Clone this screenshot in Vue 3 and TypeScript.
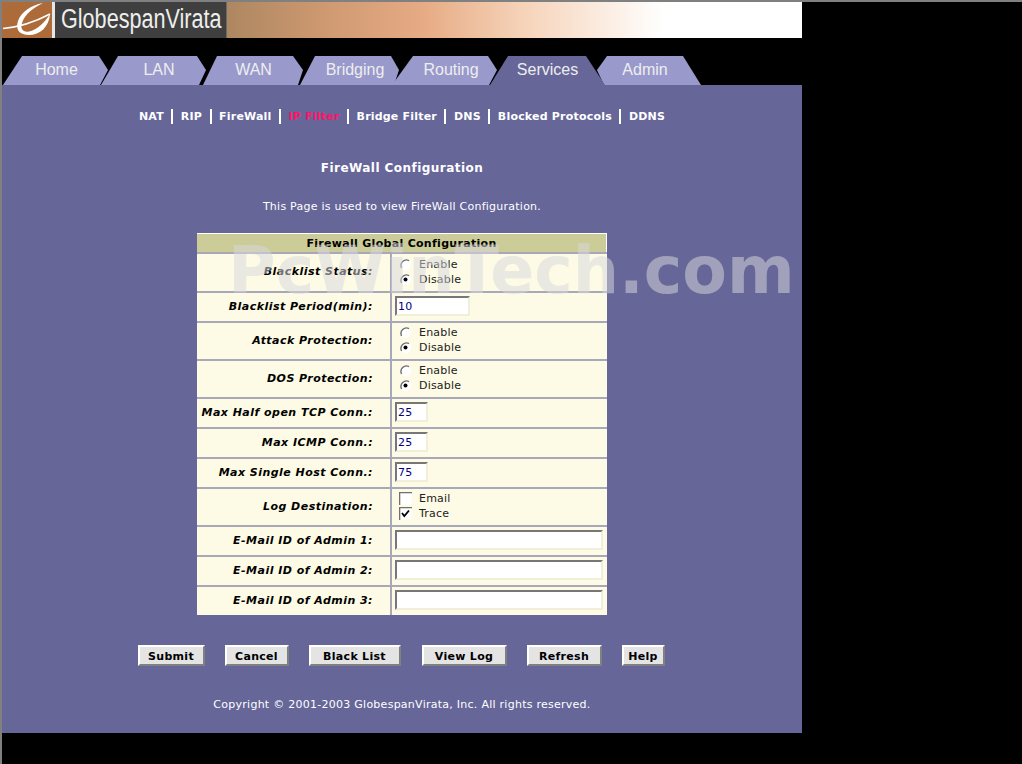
<script setup lang="ts">
const tabs = [
  { label: 'Home', cls: 'home' },
  { label: 'LAN', cls: 'lan' },
  { label: 'WAN', cls: 'wan' },
  { label: 'Bridging', cls: 'bridging' },
  { label: 'Routing', cls: 'routing' },
  { label: 'Services', cls: 'services' },
  { label: 'Admin', cls: 'admin' },
]
const links = ['NAT', 'RIP', 'FireWall', 'IP Filter', 'Bridge Filter', 'DNS', 'Blocked Protocols', 'DDNS']
type Row = {
  label: string
  kind: 'radio' | 'text' | 'check'
  h: number
  value?: string
  w?: string
}
const rows: Row[] = [
  { label: 'Blacklist Status:', kind: 'radio', h: 39 },
  { label: 'Blacklist Period(min):', kind: 'text', h: 30, value: '10', w: 'mid' },
  { label: 'Attack Protection:', kind: 'radio', h: 38 },
  { label: 'DOS Protection:', kind: 'radio', h: 38 },
  { label: 'Max Half open TCP Conn.:', kind: 'text', h: 30, value: '25', w: 'small' },
  { label: 'Max ICMP Conn.:', kind: 'text', h: 30, value: '25', w: 'small' },
  { label: 'Max Single Host Conn.:', kind: 'text', h: 30, value: '75', w: 'small' },
  { label: 'Log Destination:', kind: 'check', h: 38 },
  { label: 'E-Mail ID of Admin 1:', kind: 'text', h: 30, value: '', w: 'wide' },
  { label: 'E-Mail ID of Admin 2:', kind: 'text', h: 30, value: '', w: 'wide' },
  { label: 'E-Mail ID of Admin 3:', kind: 'text', h: 30, value: '', w: 'wide' },
]
const buttons = [
  { label: 'Submit', w: 67 },
  { label: 'Cancel', w: 64 },
  { label: 'Black List', w: 92 },
  { label: 'View Log', w: 85 },
  { label: 'Refresh', w: 75 },
  { label: 'Help', w: 43 },
]
</script>

<template>
  <div class="page">
    <header class="banner">
      <div class="logo-mark">
        <svg width="50" height="36" viewBox="0 0 50 36">
          <path d="M41 1 C29 3 19 10 16 19 C13 28 18 33 27 33 C38 33 47 25 48 12 C43 20 35 28 27 29.5 C21 30.5 18 27 20 21 C23 12 31 6 41 1 Z" fill="#fff" />
          <path d="M1 26.5 C17 25 33 20 48 12" fill="none" stroke="#fff" stroke-width="1.5" />
        </svg>
      </div>
      <div class="logo-name"><span class="logo-text">GlobespanVirata</span></div>
      <div class="logo-fade"></div>
    </header>

    <nav class="tabs">
      <div v-for="t in tabs" :key="t.label" class="tab" :class="t.cls">{{ t.label }}</div>
    </nav>

    <main class="panel">
      <div class="links">
        <template v-for="(l, i) in links" :key="l">
          <span v-if="i > 0" class="bar"></span>
          <span class="link" :class="{ hot: l === 'IP Filter' }">{{ l }}</span>
        </template>
      </div>

      <h1 class="title">FireWall Configuration</h1>
      <p class="intro">This Page is used to view FireWall Configuration.</p>

      <div class="sheet">
        <div class="sheet-head">Firewall Global Configuration</div>
        <div v-for="r in rows" :key="r.label" class="row" :style="{ height: r.h + 'px' }">
          <div class="cell-label">{{ r.label }}</div>
          <div class="cell-field">
            <div v-if="r.kind === 'radio'" class="choices">
              <div class="choice">
                <svg class="mark" width="13" height="13" viewBox="0 0 13 13">
                  <circle cx="6.5" cy="6.5" r="5.5" fill="#fff" />
                  <path d="M10 2.6 A5.5 5.5 0 0 0 2.6 10" fill="none" stroke="#707070" stroke-width="1.4" />
                </svg>
                <span>Enable</span>
              </div>
              <div class="choice">
                <svg class="mark" width="13" height="13" viewBox="0 0 13 13">
                  <circle cx="6.5" cy="6.5" r="5.5" fill="#fff" />
                  <path d="M10 2.6 A5.5 5.5 0 0 0 2.6 10" fill="none" stroke="#707070" stroke-width="1.4" />
                  <circle cx="6.5" cy="6.5" r="2" fill="#000" />
                </svg>
                <span>Disable</span>
              </div>
            </div>
            <div v-else-if="r.kind === 'check'" class="choices">
              <div class="choice">
                <svg class="mark" width="13" height="13" viewBox="0 0 13 13">
                  <rect x="0.5" y="0.5" width="12" height="12" fill="#fff" />
                  <path d="M0.5 13 V0.5 H13" fill="none" stroke="#707070" stroke-width="1.6" />
                </svg>
                <span>Email</span>
              </div>
              <div class="choice">
                <svg class="mark" width="13" height="13" viewBox="0 0 13 13">
                  <rect x="0.5" y="0.5" width="12" height="12" fill="#fff" />
                  <path d="M0.5 13 V0.5 H13" fill="none" stroke="#707070" stroke-width="1.6" />
                  <path d="M3 6 L5.3 9 L10 3.5" fill="none" stroke="#000" stroke-width="1.8" />
                </svg>
                <span>Trace</span>
              </div>
            </div>
            <input v-else class="box" :class="r.w" type="text" :value="r.value" />
          </div>
        </div>
      </div>

      <div class="actions">
        <button v-for="b in buttons" :key="b.label" class="btn" type="button" :style="{ width: b.w + 'px' }">{{ b.label }}</button>
      </div>

      <p class="copy">Copyright © 2001-2003 GlobespanVirata, Inc. All rights reserved.</p>

      <div class="watermark">PcWinTech.com</div>
    </main>
  </div>
</template>

<style>
html, body { margin: 0; background: #000; }
</style>

<style scoped>
.page {
  width: 1022px;
  height: 764px;
  box-sizing: border-box;
  background: #000;
  border-top: 2px solid #808080;
  border-left: 2px solid #808080;
  overflow: hidden;
  font-family: "DejaVu Sans", Verdana, sans-serif;
}
.banner {
  display: flex;
  width: 800px;
  height: 36px;
  background: #fff;
}
.logo-mark {
  width: 50px;
  height: 36px;
  background: #ad6b3a;
  border-right: 3px solid #e6e6e6;
  flex: none;
}
.logo-mark svg { display: block; }
.logo-name {
  width: 172px;
  height: 36px;
  flex: none;
  box-sizing: border-box;
  background: #3f3f3f;
  border-right: 1px solid #6a6a6a;
  padding-left: 6px;
  white-space: nowrap;
  overflow: hidden;
}
.logo-text {
  display: inline-block;
  color: #eeeeee;
  font-family: "Liberation Sans", sans-serif;
  font-size: 27px;
  line-height: 35px;
  transform: scaleX(0.8);
  transform-origin: left center;
}
.logo-fade {
  flex: 1;
  background: linear-gradient(90deg, #ad8761 0%, #d09a72 18%, #e6ab84 34%, #f6d4ba 52%, #fff 76%, #fff 100%);
}
.tabs {
  display: flex;
  align-items: flex-end;
  height: 29px;
  margin-top: 18px;
  padding-left: 1px;
}
.tab {
  flex: none;
  height: 29px;
  background: #9999cc;
  color: #eeeeee;
  font: 16px/28px "Liberation Sans", Arial, sans-serif;
  text-align: center;
  box-sizing: border-box;
}
.home { width: 105px; padding-left: 2px; clip-path: polygon(19px 0, 96px 0, 105px 14px, 97px 29px, 0 29px); }
.lan { width: 105px; margin-left: -7px; padding-left: 11px; clip-path: polygon(17px 0, 96px 0, 105px 14px, 98px 29px, 0 29px); }
.wan { width: 100px; margin-left: -3px; padding-left: 1px; line-height: 27px; clip-path: polygon(14px 0, 90px 0, 100px 14px, 95px 29px, 0 29px); }
.bridging { width: 99px; margin-left: -3px; padding-left: 11px; clip-path: polygon(15px 0, 91px 0, 99px 14px, 94px 29px, 0 29px); }
.routing { width: 105px; margin-left: -7px; padding-left: 13px; clip-path: polygon(21px 0, 96px 0, 105px 14px, 97px 29px, 0 29px); }
.services { width: 115px; margin-left: -7px; background: #666699; z-index: 1; clip-path: polygon(18px 0, 96px 0, 115px 29px, 0 29px); }
.admin { width: 104px; margin-left: -8px; padding-right: 8px; clip-path: polygon(10px 0, 86px 0, 104px 29px, 7px 29px, 0 14px); }

.panel {
  position: relative;
  width: 800px;
  height: 648px;
  background: #666699;
  display: flex;
  flex-direction: column;
  align-items: center;
  box-sizing: border-box;
  padding-top: 23px;
}
.links {
  display: flex;
  align-items: center;
  height: 16px;
  gap: 7.5px;
  font-size: 11px;
  letter-spacing: 0.2px;
  font-weight: bold;
  color: #fff;
  white-space: nowrap;
}
.bar { width: 2px; height: 15px; background: #fff; }
.hot { color: #ff1466; }
.title {
  margin: 36px 0 0;
  font-size: 12px;
  line-height: 16px;
  font-weight: bold;
  letter-spacing: 0.45px;
  color: #fff;
}
.intro {
  margin: 23px 0 0;
  font-size: 11px;
  line-height: 16px;
  letter-spacing: 0.25px;
  color: #fff;
}
.sheet {
  width: 410px;
  margin-top: 18px;
  background: #fdfbe5;
}
.sheet-head {
  height: 19px;
  box-sizing: border-box;
  background: #cccc99;
  border-top: 1px solid #fff;
  border-right: 1px solid #fff;
  text-align: center;
  font-size: 11px;
  line-height: 19px;
  font-weight: bold;
  letter-spacing: 0.3px;
  color: #000;
}
.row {
  display: flex;
  box-sizing: border-box;
  border-top: 2px solid #a9a8b8;
}
.cell-label {
  width: 195px;
  flex: none;
  box-sizing: border-box;
  display: flex;
  align-items: center;
  justify-content: flex-end;
  padding-right: 17px;
  padding-bottom: 2px;
  font-size: 11px;
  font-weight: bold;
  font-style: italic;
  letter-spacing: 0.47px;
  color: #000;
  white-space: nowrap;
  border-right: 2px solid #a9a8b8;
}
.cell-field {
  flex: 1;
  display: flex;
  align-items: center;
  padding-left: 3px;
  padding-bottom: 2px;
  min-width: 0;
}
.choices {
  display: flex;
  flex-direction: column;
  gap: 0;
  padding-left: 4px;
}
.choice {
  display: flex;
  align-items: center;
  height: 15px;
  gap: 7px;
  font-size: 11px;
  color: #222;
  letter-spacing: 0.2px;
}
.mark { flex: none; }
.box {
  display: block;
  box-sizing: border-box;
  height: 20px;
  padding: 0 1px;
  background: #fff;
  border: 2px solid;
  border-color: #777 #f2efd8 #f2efd8 #777;
  font: 11px "DejaVu Sans", Verdana, sans-serif;
  letter-spacing: 0.2px;
  color: #000080;
  outline: none;
  border-radius: 0;
}
.small { width: 33px; }
.mid { width: 75px; }
.wide { width: 208px; }
.actions {
  display: flex;
  gap: 20px;
  margin-top: 30px;
  margin-left: -2px;
}
.btn {
  height: 21px;
  padding: 1px 0 0;
  box-sizing: border-box;
  background: #e4e4e4;
  border: 2px solid;
  border-color: #fff #808080 #808080 #fff;
  border-radius: 0;
  font: bold 11px "DejaVu Sans", Verdana, sans-serif;
  letter-spacing: 0.3px;
  color: #000;
}
.btn:nth-child(3) { margin-right: 1px; }
.copy {
  margin: 31px 0 0;
  font-size: 11px;
  line-height: 16px;
  letter-spacing: 0.26px;
  color: #fff;
}
.watermark {
  position: absolute;
  left: 226px;
  top: 151px;
  font-size: 65px;
  line-height: 70px;
  font-weight: bold;
  white-space: nowrap;
  color: rgba(215, 215, 220, 0.52);
  pointer-events: none;
}
</style>
